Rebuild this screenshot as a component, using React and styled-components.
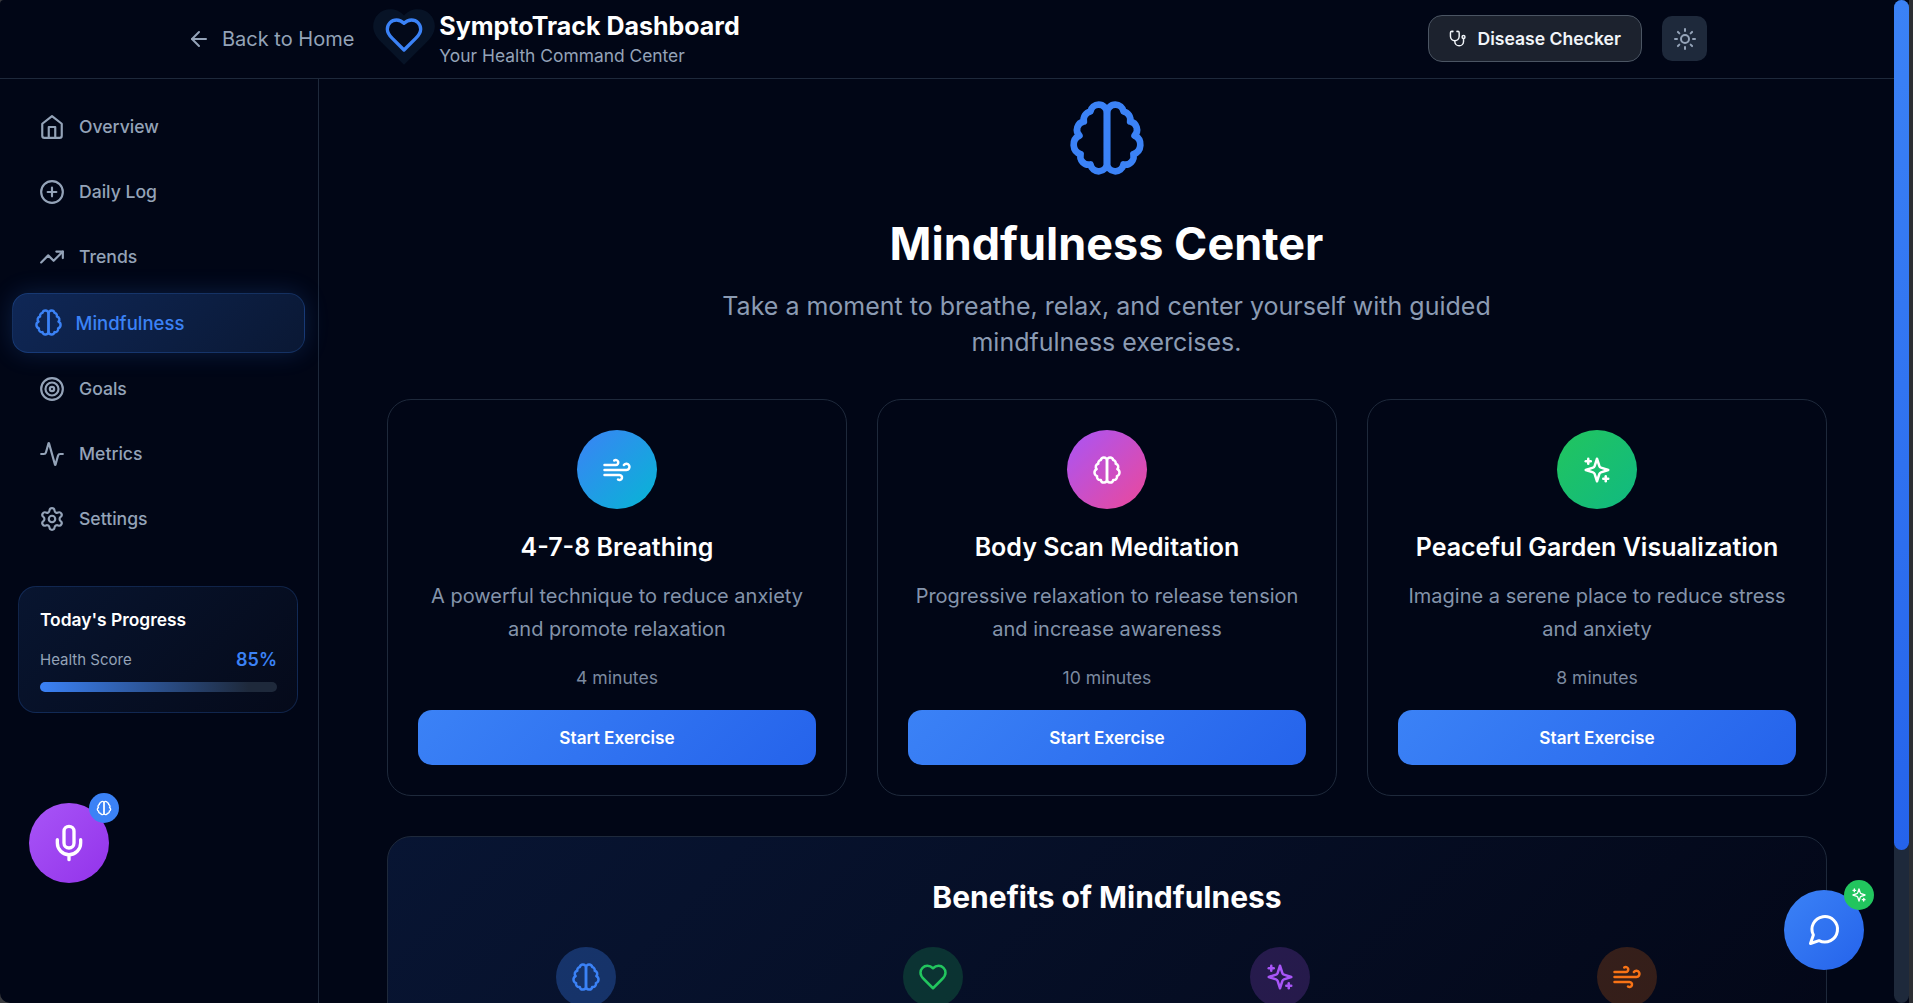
import styled, { createGlobalStyle } from 'styled-components';
import { ArrowLeft, Sun, CirclePlus, TrendingUp, Target, Activity, Settings, Wind, Mic } from 'lucide-react';

const GlobalStyle = createGlobalStyle`
    * { box-sizing: border-box; }
    html, body { margin: 0; height: 100%; overflow: hidden; background: #3a3b3f; }
    body { font-family: Inter, "Liberation Sans", sans-serif; color: #fff; }
`

const Shell = styled.div`
    display: flex;
    height: 100vh;
    background: #010616;
    border-radius: 4px 0 0 10px;
    overflow: hidden;
    position: relative;
`

const ScrollTrack = styled.div`
    flex: 0 0 15px;
    background: #1e293b;
    border-radius: 8px;
`

const ScrollThumb = styled.div`
    height: 850px;
    background: linear-gradient(180deg, #3b82f6, #2563eb);
    border-radius: 8px;
`

const WindowEdge = styled.div`
    flex: 0 0 4px;
    background: #2c2e33;
`

const Page = styled.div`
    flex: 1;
    min-width: 0;
    display: flex;
    flex-direction: column;
    position: relative;
`

const Header = styled.header`
    flex: 0 0 79px;
    display: flex;
    align-items: center;
    justify-content: space-between;
    padding: 0 187px 1px;
    border-bottom: 1px solid #1e293b;
`

const HeaderLeft = styled.div`
    display: flex;
    align-items: center;
`

const HeaderRight = styled.div`
    display: flex;
    align-items: center;
    gap: 20px;
`

const BackLink = styled.a`
    display: flex;
    align-items: center;
    gap: 11px;
    color: #94a3b8;
    font-size: 20px;
    margin-right: 30px;
`

const Logo = styled.div`
    position: relative;
    width: 40px;
    height: 40px;
    margin: 0 15px 7px 0;
    color: #3b82f6;
    display: flex;
`

const LogoGlow = styled.div`
    position: absolute;
    left: -17px;
    top: -15px;
    color: #071326;
    display: flex;
`

const LogoHeart = styled.div`
    position: relative;
    display: flex;
`

const LogoText = styled.div`
    display: flex;
    flex-direction: column;
`

const AppTitle = styled.h1`
    margin: -1px 0 0;
    font-size: 25px;
    font-weight: 700;
    line-height: 32px;
    color: #fff;
`

const AppSubtitle = styled.p`
    margin: 2px 0 -2px;
    font-size: 17.4px;
    line-height: 24px;
    color: #94a3b8;
`

const CheckerButton = styled.button`
    display: flex;
    align-items: center;
    gap: 11px;
    width: 214px;
    height: 47px;
    padding: 0 20px;
    white-space: nowrap;
    border-radius: 14px;
    border: 1px solid #4b5563;
    background: #1c222e;
    color: #f1f5f9;
    font: 600 17.6px Inter, sans-serif;
`

const ThemeButton = styled.button`
    width: 45px;
    height: 45px;
    display: flex;
    align-items: center;
    justify-content: center;
    border: none;
    border-radius: 10px;
    background: #1e293b;
    color: #94a3b8;
`

const Body = styled.div`
    flex: 1;
    min-height: 0;
    display: flex;
`

const Sidebar = styled.aside`
    flex: 0 0 319px;
    border-right: 1px solid #1e293b;
    padding: 15px 16px 0;
    display: flex;
    flex-direction: column;
`

const NavItem = styled.a`
    display: flex;
    align-items: center;
    gap: ${p => (p.$active ? 13 : 14)}px;
    height: ${p => (p.$active ? 60 : 57)}px;
    margin: ${p => (p.$active ? '4px -2.5px 3px -4.5px' : '4px 0')};
    padding-left: ${p => (p.$active ? 21 : 22)}px;
    padding-bottom: ${p => (p.$active ? 1 : 0)}px;
    font-size: ${p => (p.$active ? 18.5 : 17.6)}px;
    font-weight: 500;
    color: ${p => (p.$active ? '#3b82f6' : '#94a3b8')};
    border-radius: 16px;
    border: 1px solid ${p => (p.$active ? 'rgba(59, 130, 246, 0.22)' : 'transparent')};
    background: ${p => (p.$active ? 'linear-gradient(135deg, #0f2756, #0a1834)' : 'transparent')};
    box-shadow: ${p => (p.$active ? '0 0 24px rgba(59, 130, 246, 0.2)' : 'none')};
`

const ProgressCard = styled.section`
    margin: 35px 4px 0 2px;
    height: 127px;
    padding: 20px 20px 21px 21px;
    border: 1px solid rgba(59, 130, 246, 0.2);
    border-radius: 18px;
    background: linear-gradient(135deg, #081530, #050a1a);
`

const ProgressTitle = styled.h3`
    margin: 0 0 15px;
    font-size: 17.4px;
    font-weight: 600;
    line-height: 26px;
`

const ProgressRow = styled.div`
    display: flex;
    align-items: center;
    justify-content: space-between;
    font-size: 15px;
    line-height: 24px;
    color: #94a3b8;
    margin-bottom: 10px;
`

const ProgressValue = styled.span`
    font-size: 18px;
    font-weight: 600;
    color: #3b82f6;
`

const ProgressBar = styled.div`
    height: 10px;
    border-radius: 5px;
    background: linear-gradient(90deg, #3b82f6, #1e293b 88%);
`

const Main = styled.main`
    flex: 1;
    min-width: 0;
    overflow: hidden;
    padding: 19px 67px 0 68px;
`

const Hero = styled.div`
    display: flex;
    flex-direction: column;
    align-items: center;
    text-align: center;
    margin-bottom: 39px;
    padding-right: 1px;
`

const HeroIcon = styled.div`
    display: flex;
    color: #3b82f6;
    margin-bottom: 32px;
`

const HeroTitle = styled.h2`
    margin: 0 0 11px;
    font-size: 45px;
    line-height: 68px;
    font-weight: 700;
`

const HeroText = styled.p`
    margin: 0;
    max-width: 800px;
    font-size: 25px;
    line-height: 35.5px;
    color: #8b9bb3;
`

const Cards = styled.div`
    display: grid;
    grid-template-columns: repeat(3, minmax(0, 1fr));
    gap: 30px;
`

const Card = styled.article`
    height: 397px;
    padding: 30px;
    border: 1px solid #1e293b;
    border-radius: 24px;
    display: flex;
    flex-direction: column;
    align-items: center;
    text-align: center;
`

const CardIcon = styled.div`
    width: 80px;
    height: 80px;
    border-radius: 50%;
    display: flex;
    align-items: center;
    justify-content: center;
    background: linear-gradient(135deg, ${p => p.$from}, ${p => p.$to});
    margin-bottom: 21px;
`

const CardTitle = styled.h3`
    margin: 0 0 16px;
    font-size: 25px;
    line-height: 34px;
    font-weight: 600;
`

const CardText = styled.p`
    margin: 0 0 20px;
    font-size: 20px;
    line-height: 33px;
    color: #8494ab;
`

const Duration = styled.div`
    font-size: 17.6px;
    line-height: 24px;
    color: #7c8aa0;
    margin-bottom: 20px;
`

const StartButton = styled.button`
    width: 100%;
    height: 55px;
    flex-shrink: 0;
    border: none;
    border-radius: 14px;
    background: linear-gradient(135deg, #3b82f6, #2563eb);
    color: #fff;
    font: 600 17.2px Inter, sans-serif;
`

const Benefits = styled.section`
    margin-top: 40px;
    padding: 40px 40px 60px;
    border: 1px solid #1e293b;
    border-radius: 24px;
    background: linear-gradient(135deg, #081533, #030717);
`

const BenefitsTitle = styled.h3`
    margin: 0 0 30px;
    text-align: center;
    font-size: 30px;
    line-height: 40px;
    font-weight: 700;
`

const BenefitGrid = styled.div`
    display: grid;
    grid-template-columns: repeat(4, minmax(0, 1fr));
    gap: 30px;
    margin: 0 1px 0 -1px;
`

const BenefitIcon = styled.div`
    width: 60px;
    height: 60px;
    margin: 0 auto;
    border-radius: 50%;
    display: flex;
    align-items: center;
    justify-content: center;
    background: ${p => p.$bg};
    color: ${p => p.$color};
`

const Floating = styled.button`
    position: absolute;
    width: 80px;
    height: 80px;
    border: none;
    border-radius: 50%;
    color: #fff;
    display: flex;
    align-items: center;
    justify-content: center;
    background: linear-gradient(135deg, ${p => p.$from}, ${p => p.$to});
`

const MicButton = styled(Floating)`
    left: 29px;
    top: 803px;
`

const ChatButton = styled(Floating)`
    left: 1784px;
    top: 890px;
`

const Badge = styled.span`
    position: absolute;
    top: -10px;
    right: -10px;
    width: 30px;
    height: 30px;
    border-radius: 50%;
    display: flex;
    align-items: center;
    justify-content: center;
    background: ${p => p.$bg};
`

// the screenshot uses older lucide drawings, the package has redrawn these
const OldIcon = ({ size = 24, fill = 'none', stroke = 'currentColor', children }) => (
    <svg width={size} height={size} viewBox="0 0 24 24" fill={fill} stroke={stroke} strokeWidth="2" strokeLinecap="round" strokeLinejoin="round">
        {children}
    </svg>
)

const BrainIcon = props => (
    <OldIcon {...props}>
        <path d="M9.5 2A2.5 2.5 0 0 1 12 4.5v15a2.5 2.5 0 0 1-4.96.44 2.5 2.5 0 0 1-2.96-3.08 3 3 0 0 1-.34-5.58 2.5 2.5 0 0 1 1.32-4.24 2.5 2.5 0 0 1 1.98-3A2.5 2.5 0 0 1 9.5 2Z" />
        <path d="M14.5 2A2.5 2.5 0 0 0 12 4.5v15a2.5 2.5 0 0 0 4.96.44 2.5 2.5 0 0 0 2.96-3.08 3 3 0 0 0 .34-5.58 2.5 2.5 0 0 0-1.32-4.24 2.5 2.5 0 0 0-1.98-3A2.5 2.5 0 0 0 14.5 2Z" />
    </OldIcon>
)

const HeartIcon = props => (
    <OldIcon {...props}>
        <path d="M19 14c1.49-1.46 3-3.21 3-5.5A5.5 5.5 0 0 0 16.5 3c-1.76 0-3 .5-4.5 2-1.5-1.5-2.74-2-4.5-2A5.5 5.5 0 0 0 2 8.5c0 2.3 1.5 4.05 3 5.5l7 7Z" />
    </OldIcon>
)

const SparklesIcon = props => (
    <OldIcon {...props}>
        <path d="m12 3-1.912 5.813a2 2 0 0 1-1.275 1.275L3 12l5.813 1.912a2 2 0 0 1 1.275 1.275L12 21l1.912-5.813a2 2 0 0 1 1.275-1.275L21 12l-5.813-1.912a2 2 0 0 1-1.275-1.275L12 3Z" />
        <path d="M5 3v4" />
        <path d="M19 17v4" />
        <path d="M3 5h4" />
        <path d="M17 19h4" />
    </OldIcon>
)

const HomeIcon = props => (
    <OldIcon {...props}>
        <path d="m3 9 9-7 9 7v11a2 2 0 0 1-2 2H5a2 2 0 0 1-2-2z" />
        <polyline points="9 22 9 12 15 12 15 22" />
    </OldIcon>
)

const StethoscopeIcon = props => (
    <OldIcon {...props}>
        <path d="M4.8 2.3A.3.3 0 1 0 5 2H4a2 2 0 0 0-2 2v5a6 6 0 0 0 6 6v0a6 6 0 0 0 6-6V4a2 2 0 0 0-2-2h-1a.2.2 0 1 0 .3.3" />
        <path d="M8 15v1a6 6 0 0 0 6 6v0a6 6 0 0 0 6-6v-4" />
        <circle cx="20" cy="10" r="2" />
    </OldIcon>
)

const ChatIcon = props => (
    <OldIcon {...props}>
        <path d="m3 21 1.9-5.7a8.5 8.5 0 1 1 3.8 3.8z" />
    </OldIcon>
)

const navItems = [
    { label: 'Overview', icon: HomeIcon },
    { label: 'Daily Log', icon: CirclePlus },
    { label: 'Trends', icon: TrendingUp },
    { label: 'Mindfulness', icon: BrainIcon, active: true },
    { label: 'Goals', icon: Target },
    { label: 'Metrics', icon: Activity },
    { label: 'Settings', icon: Settings },
]

const exercises = [
    {
        title: '4-7-8 Breathing',
        text: 'A powerful technique to reduce anxiety and promote relaxation',
        duration: '4 minutes',
        icon: Wind,
        from: '#3b82f6',
        to: '#06b6d4',
    },
    {
        title: 'Body Scan Meditation',
        text: 'Progressive relaxation to release tension and increase awareness',
        duration: '10 minutes',
        icon: BrainIcon,
        from: '#a855f7',
        to: '#ec4899',
    },
    {
        title: 'Peaceful Garden Visualization',
        text: 'Imagine a serene place to reduce stress and anxiety',
        duration: '8 minutes',
        icon: SparklesIcon,
        from: '#22c55e',
        to: '#10b981',
    },
]

const benefits = [
    { icon: BrainIcon, bg: 'rgba(59, 130, 246, 0.3)', color: '#3b82f6' },
    { icon: HeartIcon, bg: 'rgba(34, 197, 94, 0.2)', color: '#22c55e' },
    { icon: SparklesIcon, bg: 'rgba(168, 85, 247, 0.2)', color: '#a855f7' },
    { icon: Wind, bg: 'rgba(249, 115, 22, 0.2)', color: '#f97316' },
]

const App = () => {
    return (
        <Shell>
            <GlobalStyle />
            <Page>
                <Header>
                    <HeaderLeft>
                        <BackLink><ArrowLeft size={24} />Back to Home</BackLink>
                        <Logo>
                            <LogoGlow><HeartIcon size={74} fill="currentColor" stroke="none" /></LogoGlow>
                            <LogoHeart><HeartIcon size={40} fill="#030919" /></LogoHeart>
                        </Logo>
                        <LogoText>
                            <AppTitle>SymptoTrack Dashboard</AppTitle>
                            <AppSubtitle>Your Health Command Center</AppSubtitle>
                        </LogoText>
                    </HeaderLeft>
                    <HeaderRight>
                        <CheckerButton><StethoscopeIcon size={21} />Disease Checker</CheckerButton>
                        <ThemeButton><Sun size={24} /></ThemeButton>
                    </HeaderRight>
                </Header>
                <Body>
                    <Sidebar>
                        {navItems.map(item => (
                            <NavItem key={item.label} $active={item.active}>
                                <item.icon size={item.active ? 29 : 26} />
                                {item.label}
                            </NavItem>
                        ))}
                        <ProgressCard>
                            <ProgressTitle>Today's Progress</ProgressTitle>
                            <ProgressRow>Health Score<ProgressValue>85%</ProgressValue></ProgressRow>
                            <ProgressBar />
                        </ProgressCard>
                    </Sidebar>
                    <Main>
                        <Hero>
                            <HeroIcon><BrainIcon size={80} /></HeroIcon>
                            <HeroTitle>Mindfulness Center</HeroTitle>
                            <HeroText>Take a moment to breathe, relax, and center yourself with guided mindfulness exercises.</HeroText>
                        </Hero>
                        <Cards>
                            {exercises.map(item => (
                                <Card key={item.title}>
                                    <CardIcon $from={item.from} $to={item.to}><item.icon size={30} /></CardIcon>
                                    <CardTitle>{item.title}</CardTitle>
                                    <CardText>{item.text}</CardText>
                                    <Duration>{item.duration}</Duration>
                                    <StartButton>Start Exercise</StartButton>
                                </Card>
                            ))}
                        </Cards>
                        <Benefits>
                            <BenefitsTitle>Benefits of Mindfulness</BenefitsTitle>
                            <BenefitGrid>
                                {benefits.map((item, i) => (
                                    <BenefitIcon key={i} $bg={item.bg} $color={item.color}><item.icon size={30} /></BenefitIcon>
                                ))}
                            </BenefitGrid>
                        </Benefits>
                    </Main>
                </Body>
            </Page>
            <ScrollTrack><ScrollThumb /></ScrollTrack>
            <WindowEdge />
            <MicButton $from="#a855f7" $to="#9333ea">
                <Mic size={40} />
                <Badge $bg="#3b82f6"><BrainIcon size={16} /></Badge>
            </MicButton>
            <ChatButton $from="#3b82f6" $to="#2563eb">
                <ChatIcon size={36} />
                <Badge $bg="#22c55e"><SparklesIcon size={16} /></Badge>
            </ChatButton>
        </Shell>
    )
}

export default App;
